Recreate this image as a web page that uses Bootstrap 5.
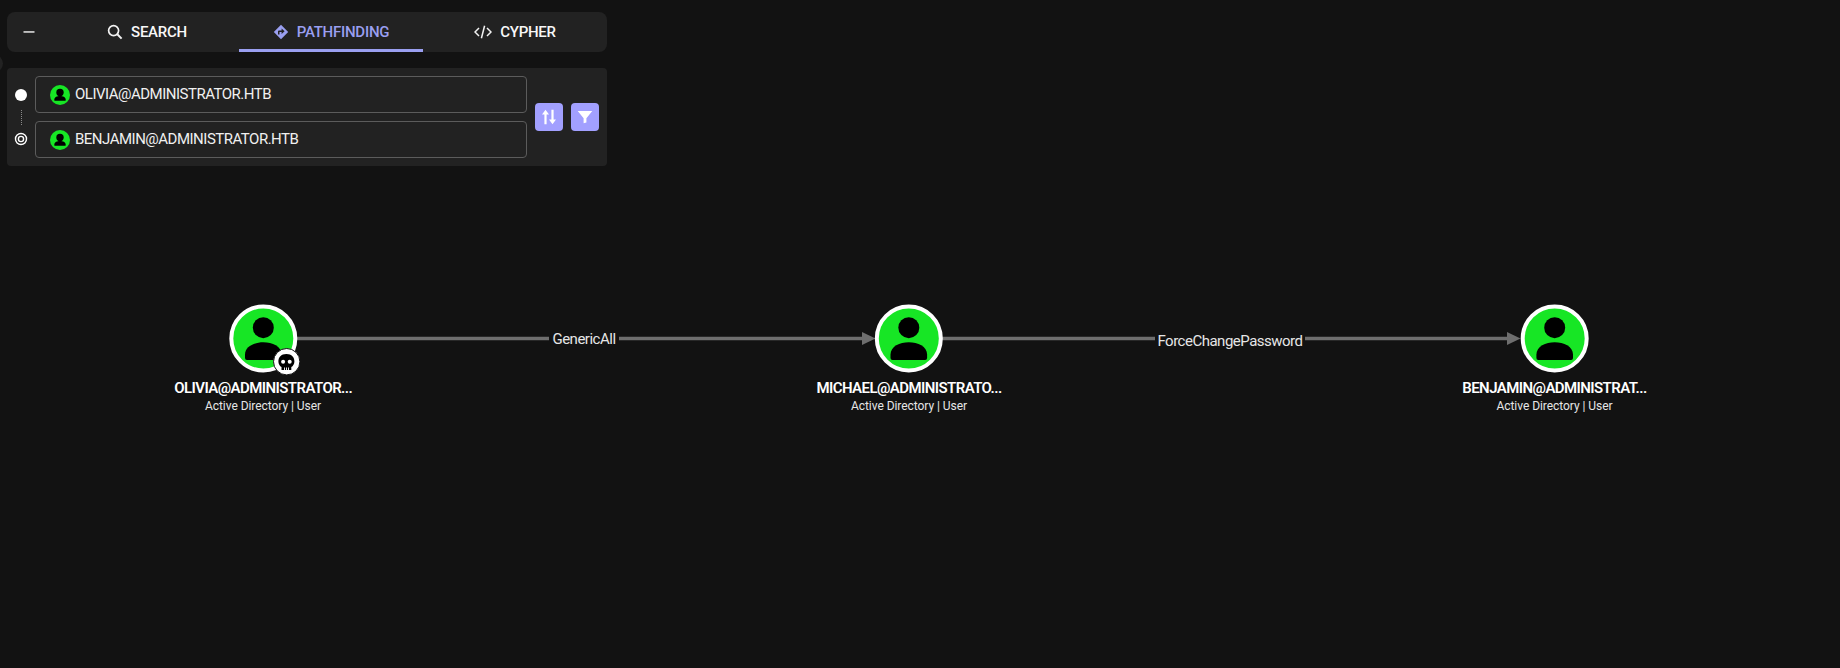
<!DOCTYPE html>
<html lang="en" data-bs-theme="dark">
<head>
<meta charset="utf-8">
<title>Pathfinding</title>
<link href="https://cdn.jsdelivr.net/npm/bootstrap@5.3.0/dist/css/bootstrap.min.css" rel="stylesheet">
<style>
html, body { height: 100%; }
body { background: #121212; color: #fff; font-family: Roboto, "Liberation Sans", sans-serif; overflow: hidden; }
.stage { position: relative; width: 1840px; height: 668px; }
.graph-layer { position: absolute; inset: 0; width: 1840px; height: 668px; }
.graph-layer .node-name { font: 600 15px Roboto, sans-serif; letter-spacing: -.58px; fill: #fff; text-anchor: middle; }
.graph-layer .node-kind { font: 400 12px Roboto, sans-serif; letter-spacing: -.05px; fill: #e6e6e6; text-anchor: middle; }
.graph-layer .edge-label { font: 400 15px Roboto, sans-serif; letter-spacing: -.5px; fill: #e6e6e6; text-anchor: middle; }
.side-nub { position: absolute; left: -14px; top: 55px; width: 17px; height: 17px; border-radius: 50%; background: #222; }
.explore-panel { position: relative; width: 600px; margin-left: 7px; padding-top: 12px; }
.tab-strip { height: 40px; background: #222; border-radius: 8px; }
.tab-min { width: 48px; color: #e6e6e6; padding-right: 4px; }
.tab-item { width: 184px; height: 40px; font-size: 15px; font-weight: 500; letter-spacing: -.25px; color: #f8f8f8; border-bottom: 3px solid transparent; text-transform: uppercase; padding-top: 3px; }
.tab-item.tab-on { color: #9a9ff0; border-bottom-color: #9a9ff0; }
.path-box { height: 98px; margin-top: 16px; background: #222; border-radius: 4px; padding: 8px; }
.rail { width: 12px; }
.rail-start { width: 12px; height: 12px; border-radius: 50%; background: #fff; flex: none; }
.rail-line { height: 15px; border-left: 1px dotted #8a8a8a; margin: 9px 0 7px; }
.node-field { height: 37px; width: 492px; margin-left: 8px; border: 1px solid #5c5c5c; border-radius: 4px; padding-left: 14px; font-size: 15px; letter-spacing: -.5px; color: #f0f0f0; }
.node-field + .node-field { margin-top: 8px; }
.mini-user { width: 20px; height: 20px; flex: none; margin-right: 5px; }
.act-btn { width: 28px; height: 28px; padding: 0; background: #a2a0ff; border: 0; border-radius: 4px; }
.act-wrap { margin-left: 8px; }
</style>
</head>
<body>
<div class="stage">
  <div class="side-nub"></div>

  <svg class="graph-layer" viewBox="0 0 1840 668" xmlns="http://www.w3.org/2000/svg">
    <g stroke="#6e6e6e" stroke-width="3.4" fill="none">
      <line x1="296" y1="338.5" x2="549" y2="338.5"/>
      <line x1="619" y1="338.5" x2="864" y2="338.5"/>
      <line x1="942" y1="338.5" x2="1155" y2="338.5"/>
      <line x1="1305" y1="338.5" x2="1510" y2="338.5"/>
    </g>
    <polygon points="862,332 875.5,338.5 862,345" fill="#6e6e6e"/>
    <polygon points="1507,332 1520.5,338.5 1507,345" fill="#6e6e6e"/>
    <text class="edge-label" x="584" y="343.5">GenericAll</text>
    <text class="edge-label" x="1230" y="346">ForceChangePassword</text>

    <defs>
      <g id="usernode">
        <circle cx="0" cy="0" r="32" fill="#17e625" stroke="#fff" stroke-width="4"/>
        <circle cx="0" cy="-10.8" r="10.5" fill="#000"/>
        <path d="M-18.3 19.5 V16 C-18.3 8 -9 3.8 0 3.8 C9 3.8 18.3 8 18.3 16 V19.5 Q18.3 21.5 16.3 21.5 H-16.3 Q-18.3 21.5 -18.3 19.5 Z" fill="#000"/>
      </g>
    </defs>

    <use href="#usernode" x="263.3" y="338.5"/>
    <use href="#usernode" x="908.8" y="338.5"/>
    <use href="#usernode" x="1554.7" y="338.5"/>

    <circle cx="286.7" cy="361.7" r="13.2" fill="#fff" stroke="#121212" stroke-width="1"/>
    <path d="M286.4 354 C281 354 278.4 357.4 278.4 361.4 C278.4 364 279.7 365.9 281.5 367 V370 H291.3 V367 C293.1 365.9 294.4 364 294.4 361.4 C294.4 357.4 291.8 354 286.4 354 Z" fill="#000"/>
    <circle cx="283.1" cy="361.8" r="2" fill="#fff"/>
    <circle cx="289.7" cy="361.8" r="2" fill="#fff"/>
    <path d="M284 367.6h.9v2.4h-.9zM286 367.6h.9v2.4h-.9zM288 367.6h.9v2.4h-.9z" fill="#fff"/>

    <text class="node-name" x="263.2" y="393">OLIVIA@ADMINISTRATOR...</text>
    <text class="node-kind" x="263" y="410">Active Directory | User</text>
    <text class="node-name" x="909" y="393">MICHAEL@ADMINISTRATO...</text>
    <text class="node-kind" x="909" y="410">Active Directory | User</text>
    <text class="node-name" x="1554.5" y="393">BENJAMIN@ADMINISTRAT...</text>
    <text class="node-kind" x="1554.5" y="410">Active Directory | User</text>
  </svg>

  <div class="explore-panel">
    <div class="tab-strip d-flex align-items-center">
      <div class="tab-min d-flex justify-content-center">
        <svg width="12" height="12" viewBox="0 0 12 12"><rect x="0.5" y="5.2" width="11" height="1.5" fill="#e6e6e6"/></svg>
      </div>
      <div class="tab-item d-flex align-items-center justify-content-center gap-2">
        <svg width="16" height="16" viewBox="0 0 16 16" fill="none" stroke="#f2f2f2" stroke-width="1.7"><circle cx="6.6" cy="6.6" r="5"/><line x1="10.3" y1="10.3" x2="14.6" y2="14.6" stroke-width="2"/></svg>
        <span>Search</span>
      </div>
      <div class="tab-item tab-on d-flex align-items-center justify-content-center gap-2">
        <svg width="16" height="16" viewBox="0 0 16 16"><path fill="#9a9ff0" fill-rule="evenodd" d="M8 .8 15.2 8 8 15.2.8 8ZM8.6 4.4v2H6a1 1 0 0 0-1 1v3h1.5V8h2.1v2l3-2.8Z"/></svg>
        <span>Pathfinding</span>
      </div>
      <div class="tab-item d-flex align-items-center justify-content-center gap-2">
        <svg width="18" height="16" viewBox="0 0 18 16" fill="none" stroke="#f2f2f2" stroke-width="1.5"><path d="M5 4 1 8l4 4M13 4l4 4-4 4M10.6 1.8 7.4 14.2"/></svg>
        <span>Cypher</span>
      </div>
    </div>

    <div class="path-box d-flex align-items-center">
      <div class="rail d-flex flex-column align-items-center">
        <div class="rail-start"></div>
        <div class="rail-line"></div>
        <svg class="flex-shrink-0" width="14" height="14" viewBox="0 0 14 14" fill="none" stroke="#fff"><circle cx="7" cy="7" r="5.5" stroke-width="1.4"/><circle cx="7" cy="7" r="2.6" stroke-width="1.4"/></svg>
      </div>
      <div>
        <div class="node-field d-flex align-items-center">
          <svg class="mini-user" viewBox="0 0 20 20"><circle cx="10" cy="10" r="10" fill="#17e625"/><circle cx="10" cy="7.4" r="3.7" fill="#000"/><path d="M4.4 15.8v-1.5c0-2.3 2.8-3.4 5.6-3.4s5.6 1.1 5.6 3.4v1.5Z" fill="#000"/></svg>
          <span>OLIVIA@ADMINISTRATOR.HTB</span>
        </div>
        <div class="node-field d-flex align-items-center">
          <svg class="mini-user" viewBox="0 0 20 20"><circle cx="10" cy="10" r="10" fill="#17e625"/><circle cx="10" cy="7.4" r="3.7" fill="#000"/><path d="M4.4 15.8v-1.5c0-2.3 2.8-3.4 5.6-3.4s5.6 1.1 5.6 3.4v1.5Z" fill="#000"/></svg>
          <span>BENJAMIN@ADMINISTRATOR.HTB</span>
        </div>
      </div>
      <div class="act-wrap d-flex gap-2">
        <button type="button" class="btn act-btn d-flex align-items-center justify-content-center" aria-label="Swap">
          <svg width="16" height="16" viewBox="0 0 16 16" fill="#fff"><path d="M4.5.7 8 5.6H5.6v9.7H3.4V5.6H1ZM10.4.7h2.2v9.7H15l-3.5 4.9L8 10.4h2.4Z"/></svg>
        </button>
        <button type="button" class="btn act-btn d-flex align-items-center justify-content-center" aria-label="Filter">
          <svg width="16" height="16" viewBox="0 0 16 16" fill="#fff"><path d="M.7 2h14.6L9.4 9.2v4.4L6.6 14.3V9.2Z"/></svg>
        </button>
      </div>
    </div>
  </div>
</div>
<script src="https://cdn.jsdelivr.net/npm/bootstrap@5.3.0/dist/js/bootstrap.bundle.min.js"></script>
</body>
</html>
